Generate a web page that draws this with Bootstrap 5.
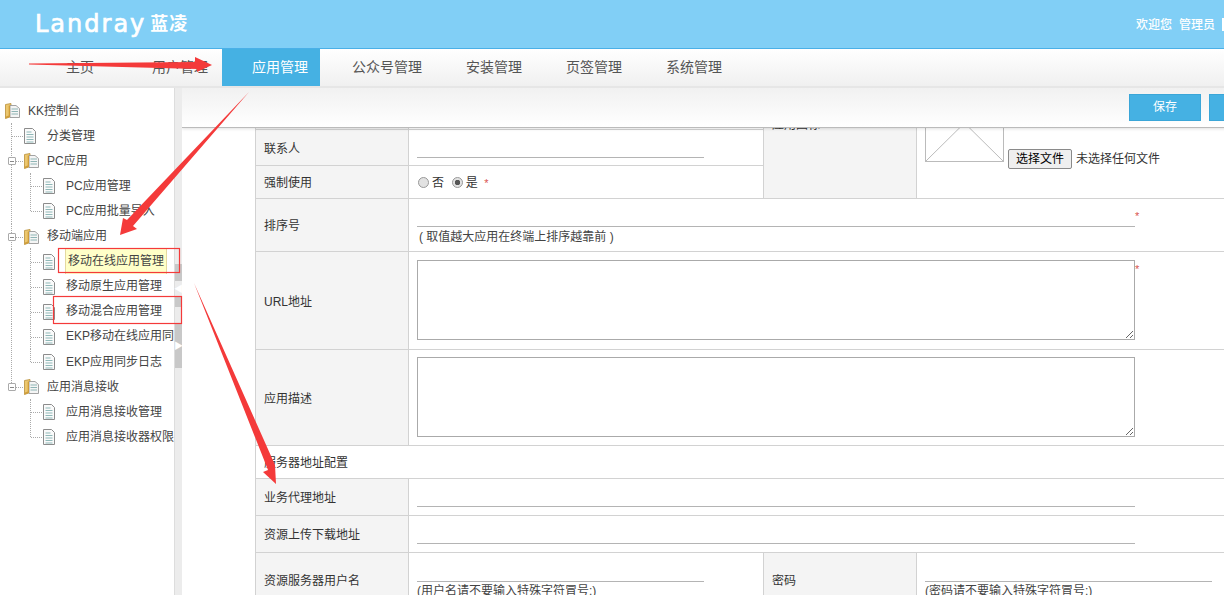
<!DOCTYPE html>
<html lang="zh">
<head>
<meta charset="utf-8">
<title>KK控制台</title>
<link href="https://cdn.jsdelivr.net/npm/bootstrap@5.3.0/dist/css/bootstrap.min.css" rel="stylesheet">
<style>
html,body{height:595px;overflow:hidden}
body{position:relative;font:12px/1.4 "Liberation Sans","Noto Sans CJK SC",sans-serif;color:#333;background:#fff}
.top-head{height:49px;background:#81cff6;border-bottom:1px solid #4ab0e8;color:#fff;padding-left:35px}
.logo-en{font:24px/1 "DejaVu Sans",sans-serif;letter-spacing:2px;-webkit-text-stroke:.7px #fff}
.logo-cn{font:700 18px/1 "Noto Sans CJK SC",sans-serif;margin:-5px 0 0 4px;letter-spacing:1px}
.who{font-weight:500;gap:7px;padding-top:2px;white-space:nowrap}
.who .bar{width:2px;height:13px;background:#fff}
.main-nav{height:37px;padding-left:44px;background:linear-gradient(#fff,#f0f0f0);flex-wrap:nowrap}
.main-nav .nav-link{padding:0 22px;line-height:36px;font-size:14px;color:#555;white-space:nowrap}
.main-nav .nav-link:first-child{margin-right:14px}
.main-nav .nav-link.active{background:#45b1e3;color:#fff;padding:0 12px 0 30px;margin:0 10px 0 -8px}
.sep{height:2px;background:#e6e6e6}
.work{height:507px;overflow:hidden}
.side{width:174px;flex:none;overflow:hidden;padding-top:10.5px;color:#444}
.tree-row{height:25.1px;white-space:nowrap}
.tree-row svg,.tree-row .lbl{flex:none}
.tree-row .lbl{margin-left:11px}
.tree-row .lbl.fd{margin-left:8px}
.tree-row.l0{padding-left:5px}
.gd{position:relative;width:19px;height:100%;flex:none}
.gd:first-child{margin-left:5px}
.gd::before{content:"";position:absolute;left:6px;top:-1px;bottom:0;border-left:1px dotted #aaa}
.gd.end::before{bottom:50%}
.gd.branch::after{content:"";position:absolute;left:7px;top:50%;width:11px;border-top:1px dotted #aaa}
.gd.none::before{display:none}
.minus{position:absolute;left:3px;top:50%;margin-top:-4px;width:8px;height:8px;border:1px solid #aaa;border-radius:1px;background:#fff;z-index:1}
.minus::after{content:"";position:absolute;left:1px;right:1px;top:3px;border-top:1px solid #888}
.tree-row .lbl.picked{background:#ffffc8;border:1px solid #e4d9a0;border-width:0 1px;padding:4px 2px;line-height:17px;margin-left:10px}
.split{width:8px;flex:none;background:#ececec;border-left:1px solid #ddd;color:#fff;font-size:9px;line-height:1}
.split .s0{height:176px}
.split .sg{background:#c8c8c8}
.s1{height:17px}.s2{height:16px}.s3{height:10px}.s4{height:17px}.s5{height:44px}
.pane{min-width:0;overflow:hidden}
.tools{height:40px;background:linear-gradient(#f1f1f1,#fff);border-bottom:1px solid #bbb;box-shadow:0 1px 3px rgba(0,0,0,.12);position:relative;z-index:2;gap:8px;padding:6px 0 0 0;margin-right:-57px;justify-content:flex-end}
.tools .btn{width:72px;height:27px;padding:0;border-radius:0;background:#45b1e3;border:1px solid #3ba6d8;color:#fff;font-size:12px;line-height:25px}
.scroll-area{height:467px;overflow:hidden;padding-left:73px}
.form-grid{width:1000px;table-layout:fixed;margin:-76px 0 0;--bs-table-border-color:#d2d2d2;--bs-body-color:#333;--bs-table-color:#333;font-size:12px}
.form-grid>tbody>tr>td{padding:0 8px;vertical-align:middle;border-color:#d2d2d2;box-shadow:none}
.form-grid>tbody>tr>td.lab{background:#f4f4f4;padding-top:3px}
.form-grid>tbody>tr>td.sec{padding-top:2px}
.form-grid>tbody>tr>td.lab.top-lab{padding-top:0}
.form-grid>tbody>tr>td.radios{padding-top:2px}
.r0{height:77px}.r1{height:36px}.r2{height:33px}.r3{height:53px}.r4{height:98px}.r5{height:96px}.r6{height:33px}.r7{height:37px}.r8{height:54px}
.line-in{display:block;border:0;border-bottom:1px solid #b4b4b4;background:transparent;outline:0;padding:0;height:20px}
.w-a{width:287px}.w-b{width:718px}
.star{color:#d9534f;font-size:11px}
.star-up{position:relative;top:2px}
.tall{display:block;width:718px;border:1px solid #aaa;height:80px;margin-top:-2px;resize:both;background:#fff;border-radius:0}
.radio-in{appearance:none;-webkit-appearance:none;width:11px;height:11px;margin:0 3px 0 1px;vertical-align:-1px;border-radius:50%;border:1px solid #999;background:#e2e2e2}
.radio-in:checked{background:radial-gradient(circle,#555 0 2.500px,#e2e2e2 3px)}
.hint{line-height:13px;margin-top:3px;color:#444}
.hint-main{margin-top:4px;padding-left:2px}
.pic-cell{vertical-align:bottom!important;padding-bottom:36px!important}
.broken{width:79px;height:78px;display:block;flex:none}
.pick-btn{background:#efefef;border:1px solid #8a8a8a;border-radius:2px;font-size:12px;line-height:17px;height:20px;padding:0 7px;margin:0 4px 0 4px;color:#000;position:relative;top:7px;white-space:nowrap}
.pick-txt{position:relative;top:6px;white-space:nowrap}
.marks{position:absolute;left:0;top:0;width:1224px;height:595px;pointer-events:none;z-index:5}
</style>
</head>
<body>
<header class="top-head d-flex align-items-center justify-content-between">
  <div class="d-flex align-items-center"><span class="logo-en">Landray</span><span class="logo-cn">蓝凌</span></div>
  <div class="who d-flex align-items-center"><span>欢迎您</span><span>管理员</span><span class="bar"></span></div>
</header>
<nav class="nav main-nav">
  <a class="nav-link" href="#">主页</a>
  <a class="nav-link" href="#">用户管理</a>
  <a class="nav-link active" href="#">应用管理</a>
  <a class="nav-link" href="#">公众号管理</a>
  <a class="nav-link" href="#">安装管理</a>
  <a class="nav-link" href="#">页签管理</a>
  <a class="nav-link" href="#">系统管理</a>
</nav>
<div class="sep"></div>

<svg width="0" height="0" class="d-block" aria-hidden="true">
  <defs>
    <symbol id="folder" viewBox="0 0 15 16">
      <path d="M.5 1.500 6 .5v13l-5.500 2z" fill="#ecc76e" stroke="#b98f3a" stroke-width=".8"/>
      <path d="M5 2.500h6l3.500 3v9H5z" fill="#f5f5f5" stroke="#999" stroke-width=".9"/>
      <path d="M6.500 6h6.500M6.500 8.500h6.500M6.500 11h6.500" stroke="#8fb5b5" stroke-width="1"/>
      <path d="M.5 15.500 5 13.800V2.500L3.700 2.800v9.700L.5 13.700z" fill="#cf9d3a"/>
    </symbol>
    <symbol id="doc" viewBox="0 0 12 16">
      <path d="M.5.500h8l3 3v12h-11z" fill="#fafafa" stroke="#8c8c8c"/>
      <path d="M2.500 4h5M2.500 6.500h7M2.500 9h7M2.500 11.500h7M2.500 14h7" stroke="#8fb8b8" stroke-width="1"/>
    </symbol>
  </defs>
</svg>

<div class="work d-flex">
  <aside class="side">
    <div class="tree-row l0 d-flex align-items-center"><svg width="15" height="16"><use href="#folder"/></svg><span class="lbl fd">KK控制台</span></div>
    <div class="tree-row d-flex align-items-center"><span class="gd branch"></span><svg width="12" height="16"><use href="#doc"/></svg><span class="lbl">分类管理</span></div>
    <div class="tree-row d-flex align-items-center"><span class="gd branch"><i class="minus"></i></span><svg width="15" height="16"><use href="#folder"/></svg><span class="lbl fd">PC应用</span></div>
    <div class="tree-row d-flex align-items-center"><span class="gd"></span><span class="gd branch"></span><svg width="12" height="16"><use href="#doc"/></svg><span class="lbl">PC应用管理</span></div>
    <div class="tree-row d-flex align-items-center"><span class="gd"></span><span class="gd branch end"></span><svg width="12" height="16"><use href="#doc"/></svg><span class="lbl">PC应用批量导入</span></div>
    <div class="tree-row d-flex align-items-center"><span class="gd branch"><i class="minus"></i></span><svg width="15" height="16"><use href="#folder"/></svg><span class="lbl fd">移动端应用</span></div>
    <div class="tree-row d-flex align-items-center"><span class="gd"></span><span class="gd branch"></span><svg width="12" height="16"><use href="#doc"/></svg><span class="lbl picked">移动在线应用管理</span></div>
    <div class="tree-row d-flex align-items-center"><span class="gd"></span><span class="gd branch"></span><svg width="12" height="16"><use href="#doc"/></svg><span class="lbl">移动原生应用管理</span></div>
    <div class="tree-row d-flex align-items-center"><span class="gd"></span><span class="gd branch"></span><svg width="12" height="16"><use href="#doc"/></svg><span class="lbl">移动混合应用管理</span></div>
    <div class="tree-row d-flex align-items-center"><span class="gd"></span><span class="gd branch"></span><svg width="12" height="16"><use href="#doc"/></svg><span class="lbl">EKP移动在线应用同步日志</span></div>
    <div class="tree-row d-flex align-items-center"><span class="gd"></span><span class="gd branch end"></span><svg width="12" height="16"><use href="#doc"/></svg><span class="lbl">EKP应用同步日志</span></div>
    <div class="tree-row d-flex align-items-center"><span class="gd branch end"><i class="minus"></i></span><svg width="15" height="16"><use href="#folder"/></svg><span class="lbl fd">应用消息接收</span></div>
    <div class="tree-row d-flex align-items-center"><span class="gd none"></span><span class="gd branch"></span><svg width="12" height="16"><use href="#doc"/></svg><span class="lbl">应用消息接收管理</span></div>
    <div class="tree-row d-flex align-items-center"><span class="gd none"></span><span class="gd branch end"></span><svg width="12" height="16"><use href="#doc"/></svg><span class="lbl">应用消息接收器权限</span></div>
  </aside>
  <div class="split d-flex flex-column">
    <div class="s0"></div>
    <div class="sg s1"></div>
    <div class="s2 d-flex align-items-center justify-content-center">◀</div>
    <div class="sg s3"></div>
    <div class="s4"></div>
    <div class="sg s5 d-flex align-items-center justify-content-center">▶</div>
  </div>
  <main class="pane flex-grow-1">
    <div class="tools d-flex">
      <button class="btn" type="button">保存</button>
      <button class="btn" type="button">关闭</button>
    </div>
    <div class="scroll-area">
      <table class="table table-bordered form-grid">
        <colgroup><col style="width:153px"><col style="width:355px"><col style="width:153px"><col></colgroup>
        <tbody>
          <tr class="r0"><td class="lab"></td><td></td>
            <td class="lab top-lab" rowspan="3">应用图标</td>
            <td class="pic-cell" rowspan="3">
              <div class="d-flex align-items-end">
                <svg class="broken" viewBox="0 0 79 78"><rect x=".5" y=".5" width="78" height="77" fill="#fff" stroke="#bbb"/><path d="M1 1 78 77M78 1 1 77" stroke="#bbb" stroke-width="1"/></svg>
                <button class="pick-btn" type="button">选择文件</button><span class="pick-txt">未选择任何文件</span>
              </div>
            </td></tr>
          <tr class="r1"><td class="lab">联系人</td><td><input class="line-in w-a" type="text" aria-label="联系人"></td></tr>
          <tr class="r2"><td class="lab">强制使用</td><td class="radios"><input class="radio-in" type="radio" name="force" aria-label="否">否 &nbsp;<input class="radio-in" type="radio" name="force" checked aria-label="是">是 &nbsp;<span class="star">*</span></td></tr>
          <tr class="r3"><td class="lab">排序号</td><td colspan="3">
            <div class="d-flex"><input class="line-in w-b" type="text" aria-label="排序号"><span class="star star-up">*</span></div>
            <div class="hint hint-main">( 取值越大应用在终端上排序越靠前 )</div></td></tr>
          <tr class="r4"><td class="lab">URL地址</td><td colspan="3"><div class="d-flex"><textarea class="tall" aria-label="URL地址"></textarea><span class="star">*</span></div></td></tr>
          <tr class="r5"><td class="lab">应用描述</td><td colspan="3"><textarea class="tall" aria-label="应用描述"></textarea></td></tr>
          <tr class="r6"><td class="sec" colspan="4">服务器地址配置</td></tr>
          <tr class="r7"><td class="lab">业务代理地址</td><td colspan="3"><input class="line-in w-b" type="text" aria-label="业务代理地址"></td></tr>
          <tr class="r7"><td class="lab">资源上传下载地址</td><td colspan="3"><input class="line-in w-b" type="text" aria-label="资源上传下载地址"></td></tr>
          <tr class="r8"><td class="lab">资源服务器用户名</td><td><input class="line-in w-a" type="text" aria-label="用户名"><div class="hint">(用户名请不要输入特殊字符冒号:)</div></td>
            <td class="lab">密码</td><td><input class="line-in w-a" type="text" aria-label="密码"><div class="hint">(密码请不要输入特殊字符冒号:)</div></td></tr>
        </tbody>
      </table>
    </div>
  </main>
</div>

<svg class="marks" viewBox="0 0 1224 595" aria-hidden="true">
  <g fill="#f43a3a">
    <polygon points="29,63.500 195,62 195,57 212,65 197,72 197,69 29,64.500"/>
    <polygon points="249,92 133,226 137,229 120,235 123,218 127,220"/>
    <polygon points="194,283 275,465 276,484 263,472 268,470"/>
  </g>
  <g fill="none" stroke="#f43a3a" stroke-width="1.200">
    <rect x="58.500" y="248.500" width="121" height="24"/>
    <rect x="53.500" y="296.500" width="128" height="27"/>
  </g>
</svg>
<script src="https://cdn.jsdelivr.net/npm/bootstrap@5.3.0/dist/js/bootstrap.bundle.min.js"></script>
</body>
</html>
